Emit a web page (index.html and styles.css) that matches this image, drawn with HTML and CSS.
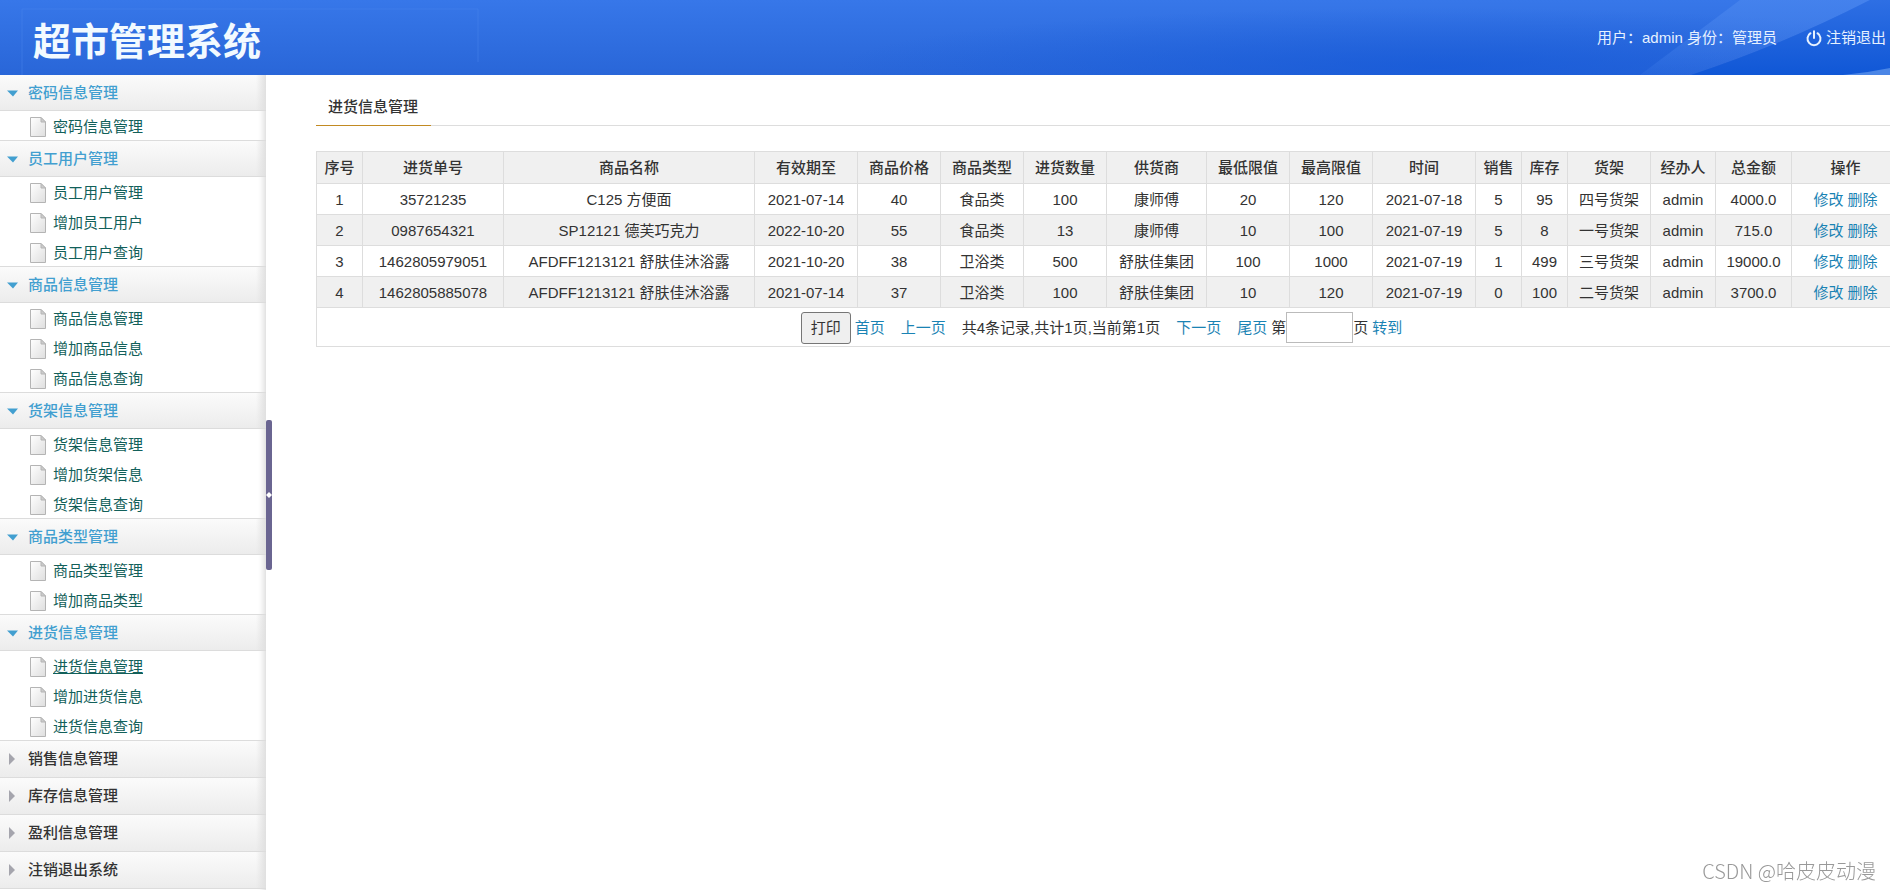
FILE: index.html
```html
<!DOCTYPE html>
<html lang="zh-CN">
<head>
  <meta charset="UTF-8" />
  <meta name="viewport" content="width=device-width, initial-scale=1" />
  <title>超市管理系统</title>
  <link rel="stylesheet" href="styles.css">
</head>
<body>
  <svg class="sprite" aria-hidden="true">
    <symbol id="page" viewBox="0 0 16 20">
      <linearGradient id="paper" x1="0" y1="0" x2="1" y2="1">
        <stop offset="0" stop-color="#fff" />
        <stop offset="1" stop-color="#dedede" />
      </linearGradient>
      <path d="M.5.5h10.500l4.500 4.500v14.500H.5z" fill="url(#paper)" stroke="#b4b4b4" />
      <path d="M11 .5V5h4.500z" fill="#ccc" stroke="#b4b4b4" />
    </symbol>
  </svg>

  <header class="header">
    <svg class="header-bg" viewBox="0 0 1890 75" preserveAspectRatio="none" aria-hidden="true">
      <defs>
        <linearGradient id="beam" x1="0" y1="1" x2="0" y2="0">
          <stop offset="0" stop-color="#4a86ee" stop-opacity=".15" />
          <stop offset="1" stop-color="#4a86ee" stop-opacity=".7" />
        </linearGradient>
        <linearGradient id="corner" x1="0" y1="1" x2="0" y2="0">
          <stop offset="0" stop-color="#1057d6" />
          <stop offset="1" stop-color="#2e6fe4" />
        </linearGradient>
      </defs>
      <path d="M1640 75L1740 0H1870Q1780 46 1691 75z" fill="url(#beam)" />
      <path d="M1691 75Q1780 46 1870 0H1890V75z" fill="url(#corner)" />
      <path d="M1843 75Q1866 73 1890 68V75z" fill="#4b86e6" />
      <path d="M22 75V9H478V62" fill="none" stroke="#4a86ee" stroke-opacity=".5" />
    </svg>
    <h1>超市管理系统</h1>
    <div class="user">
      <span>用户：admin 身份：管理员</span>
      <a href="#" class="logout">
        <svg width="16" height="17" viewBox="0 0 16 17" fill="none" stroke="#e6f1ff" stroke-width="2" stroke-linecap="round">
          <path d="M4.500 3.200A6.500 6.500 0 1 0 11.500 3.200M8 1.200V8" />
        </svg>
        注销退出
      </a>
    </div>
  </header>

  <div class="layout">
    <nav class="sidebar">
      <h3 class="open">密码信息管理</h3>
      <ul>
        <li><svg><use href="#page" /></svg><a href="#">密码信息管理</a></li>
      </ul>
      <h3 class="open">员工用户管理</h3>
      <ul>
        <li><svg><use href="#page" /></svg><a href="#">员工用户管理</a></li>
        <li><svg><use href="#page" /></svg><a href="#">增加员工用户</a></li>
        <li><svg><use href="#page" /></svg><a href="#">员工用户查询</a></li>
      </ul>
      <h3 class="open">商品信息管理</h3>
      <ul>
        <li><svg><use href="#page" /></svg><a href="#">商品信息管理</a></li>
        <li><svg><use href="#page" /></svg><a href="#">增加商品信息</a></li>
        <li><svg><use href="#page" /></svg><a href="#">商品信息查询</a></li>
      </ul>
      <h3 class="open">货架信息管理</h3>
      <ul>
        <li><svg><use href="#page" /></svg><a href="#">货架信息管理</a></li>
        <li><svg><use href="#page" /></svg><a href="#">增加货架信息</a></li>
        <li><svg><use href="#page" /></svg><a href="#">货架信息查询</a></li>
      </ul>
      <h3 class="open">商品类型管理</h3>
      <ul>
        <li><svg><use href="#page" /></svg><a href="#">商品类型管理</a></li>
        <li><svg><use href="#page" /></svg><a href="#">增加商品类型</a></li>
      </ul>
      <h3 class="open">进货信息管理</h3>
      <ul>
        <li><svg><use href="#page" /></svg><a href="#" class="current">进货信息管理</a></li>
        <li><svg><use href="#page" /></svg><a href="#">增加进货信息</a></li>
        <li><svg><use href="#page" /></svg><a href="#">进货信息查询</a></li>
      </ul>
      <h3>销售信息管理</h3>
      <h3>库存信息管理</h3>
      <h3>盈利信息管理</h3>
      <h3>注销退出系统</h3>
    </nav>

    <div class="splitter"><div class="handle"></div></div>

    <main class="main">
      <div class="tabs"><h2>进货信息管理</h2></div>

      <table>
        <colgroup>
          <col class="w-num"><col class="w-order"><col class="w-name"><col class="w-date">
          <col class="w-mid"><col class="w-mid"><col class="w-mid"><col class="w-supplier">
          <col class="w-mid"><col class="w-mid"><col class="w-date"><col class="w-num">
          <col class="w-num"><col class="w-mid"><col class="w-agent"><col class="w-total"><col class="w-action">
        </colgroup>
        <thead>
          <tr>
            <th>序号</th><th>进货单号</th><th>商品名称</th><th>有效期至</th><th>商品价格</th><th>商品类型</th>
            <th>进货数量</th><th>供货商</th><th>最低限值</th><th>最高限值</th><th>时间</th><th>销售</th>
            <th>库存</th><th>货架</th><th>经办人</th><th>总金额</th><th>操作</th>
          </tr>
        </thead>
        <tbody>
          <tr>
            <td>1</td><td>35721235</td><td>C125 方便面</td><td>2021-07-14</td><td>40</td><td>食品类</td>
            <td>100</td><td>康师傅</td><td>20</td><td>120</td><td>2021-07-18</td><td>5</td>
            <td>95</td><td>四号货架</td><td>admin</td><td>4000.0</td><td><a href="#">修改</a> <a href="#">删除</a></td>
          </tr>
          <tr>
            <td>2</td><td>0987654321</td><td>SP12121 德芙巧克力</td><td>2022-10-20</td><td>55</td><td>食品类</td>
            <td>13</td><td>康师傅</td><td>10</td><td>100</td><td>2021-07-19</td><td>5</td>
            <td>8</td><td>一号货架</td><td>admin</td><td>715.0</td><td><a href="#">修改</a> <a href="#">删除</a></td>
          </tr>
          <tr>
            <td>3</td><td>1462805979051</td><td>AFDFF1213121 舒肤佳沐浴露</td><td>2021-10-20</td><td>38</td><td>卫浴类</td>
            <td>500</td><td>舒肤佳集团</td><td>100</td><td>1000</td><td>2021-07-19</td><td>1</td>
            <td>499</td><td>三号货架</td><td>admin</td><td>19000.0</td><td><a href="#">修改</a> <a href="#">删除</a></td>
          </tr>
          <tr>
            <td>4</td><td>1462805885078</td><td>AFDFF1213121 舒肤佳沐浴露</td><td>2021-07-14</td><td>37</td><td>卫浴类</td>
            <td>100</td><td>舒肤佳集团</td><td>10</td><td>120</td><td>2021-07-19</td><td>0</td>
            <td>100</td><td>二号货架</td><td>admin</td><td>3700.0</td><td><a href="#">修改</a> <a href="#">删除</a></td>
          </tr>
        </tbody>
        <tfoot>
          <tr>
            <td colspan="17">
              <div class="pager">
                <button type="button">打印</button>
                <a href="#">首页</a>
                <a href="#">上一页</a>
                <span>共4条记录,共计1页,当前第1页</span>
                <a href="#">下一页</a>
                <a href="#" class="last">尾页</a>
                <label for="pageNo">第</label>
                <input type="text" id="pageNo" />
                <span class="unit">页</span>
                <a href="#" class="go">转到</a>
              </div>
            </td>
          </tr>
        </tfoot>
      </table>
    </main>
  </div>

  <div class="watermark">CSDN @哈皮皮动漫</div>
</body>
</html>
```
FILE: styles.css
```css
* {
  box-sizing: border-box;
}
body {
  margin: 0;
  min-height: 100vh;
  display: flex;
  flex-direction: column;
  overflow: hidden;
  background: #fff;
  color: #333;
  font-family: "Liberation Sans", "Noto Sans CJK SC", sans-serif;
  font-size: 15px;
  line-height: 20px;
}
h1, h2, h3, ul {
  margin: 0;
  padding: 0;
}
a {
  color: #1a83b4;
  text-decoration: none;
}
.sprite {
  position: absolute;
  width: 0;
  height: 0;
}

/* top bar */
.header {
  position: relative;
  display: flex;
  justify-content: space-between;
  align-items: center;
  height: 75px;
  padding: 0 4px 0 33px;
  color: #e6f1ff;
  background:
    radial-gradient(ellipse 600px 60px at 76% 90%, rgba(20, 88, 216, 0.7), rgba(20, 88, 216, 0)),
    linear-gradient(#3777e9, #2966d8);
}
.header-bg {
  position: absolute;
  left: 0;
  top: 0;
  width: 100%;
  height: 100%;
}
.header h1 {
  position: relative;
  padding-top: 8px;
  color: #f2faff;
  font-size: 38px;
  line-height: 48px;
}
.user, .logout {
  position: relative;
  display: flex;
  align-items: center;
}
.user {
  gap: 29px;
}
.logout {
  gap: 4px;
  padding-top: 1px;
  color: #e6f1ff;
}

.layout {
  flex: 1;
  display: flex;
}

/* left menu */
.sidebar {
  width: 266px;
  flex-shrink: 0;
  background: #fff;
  box-shadow: inset -8px 0 6px -6px #d8d8d8;
}
.sidebar h3 {
  display: flex;
  align-items: center;
  height: 37px;
  padding-left: 7px;
  border-bottom: 1px solid #dcdcdc;
  background: linear-gradient(90deg, rgba(224, 224, 224, 0) 256px, #e0e0e0), linear-gradient(#fbfbfb, #ececec);
  color: #333;
  font-size: 15px;
  font-weight: 500;
}
.sidebar h3::before {
  content: "";
  width: 21px;
  height: 12px;
  background: #a5a5ad;
  clip-path: polygon(2px 0, 8px 6px, 2px 12px);
}
.sidebar h3.open {
  height: 36px;
  color: #429fd0;
}
.sidebar h3.open::before {
  background: #429fd0;
  clip-path: polygon(0 4px, 11px 4px, 6px 10px);
}
.sidebar ul {
  list-style: none;
  border-bottom: 1px solid #dcdcdc;
}
.sidebar li {
  display: flex;
  align-items: center;
  gap: 7px;
  height: 30px;
  padding: 2px 0 0 30px;
}
.sidebar li:last-child {
  height: 29px;
}
.sidebar li svg {
  width: 16px;
  height: 20px;
}
.sidebar li a {
  color: #12605a;
}
.sidebar li a:hover, .sidebar li a.current {
  text-decoration: underline;
}

/* drag bar between menu and content */
.splitter {
  display: flex;
  align-items: center;
  width: 6px;
}
.handle {
  display: flex;
  align-items: center;
  justify-content: center;
  width: 6px;
  height: 150px;
  margin-top: 25px;
  border-radius: 2px;
  background: #6a6591;
}
.handle::before {
  content: "";
  width: 6px;
  height: 6px;
  background: #fff;
  clip-path: polygon(50% 0, 100% 50%, 50% 100%, 0 50%);
}

/* content */
.main {
  flex: 1;
  min-width: 0;
  padding: 15px 0 0 44px;
}
.tabs {
  display: flex;
  margin-bottom: 25px;
  border-bottom: 1px solid #ddd;
}
.tabs h2 {
  margin-bottom: -1px;
  padding: 7px 13px 8px 12px;
  border-bottom: 1px solid #c28a22;
  font-size: 15px;
  font-weight: 500;
}
table {
  width: calc(100% + 8px);
  table-layout: fixed;
  border-collapse: collapse;
  text-align: center;
}
th, td {
  height: 31px;
  padding: 1px 0 0;
  border: 1px solid #ddd;
  white-space: nowrap;
}
th {
  height: 32px;
  font-weight: 500;
}
thead tr, tbody tr:nth-child(even) {
  background: #f0f0f0;
}
tfoot td {
  height: 39px;
}
.w-num { width: 46px; }
.w-order { width: 141px; }
.w-name { width: 251px; }
.w-date { width: 103px; }
.w-mid { width: 83px; }
.w-supplier { width: 100px; }
.w-agent { width: 65px; }
.w-total { width: 76px; }
.w-action { width: 108px; }

.pager {
  display: flex;
  justify-content: center;
  align-items: center;
  padding-right: 13px;
}
.pager button {
  width: 50px;
  height: 32px;
  margin-right: 4px;
  padding: 0;
  border: 1px solid #767676;
  border-radius: 3px;
  background: #efefef;
  color: #333;
  font: inherit;
}
.pager a, .pager span {
  margin-right: 16px;
}
.pager input {
  width: 67px;
  height: 31px;
  border: 1px solid #bbb;
  font: inherit;
}
.pager .last, .pager .unit {
  margin-right: 4px;
}
.pager .go {
  margin-right: 0;
}

.watermark {
  position: fixed;
  right: 14px;
  bottom: 7px;
  color: #999;
  font-family: "Noto Sans CJK SC", sans-serif;
  font-size: 20px;
  font-weight: 300;
  line-height: 24px;
}
```
